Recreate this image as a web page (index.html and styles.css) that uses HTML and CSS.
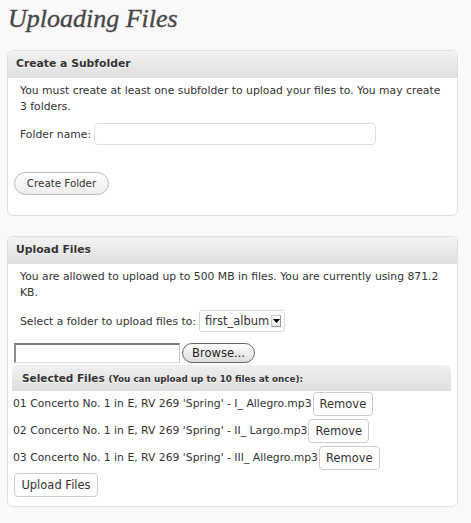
FILE: index.html
```html
<!DOCTYPE html>
<html>
<head>
<meta charset="utf-8">
<link rel="stylesheet" href="styles.css">
</head>
<body>
<h1 class="title">Uploading Files</h1>

<div class="box box-folder">
  <div class="box-head">Create a Subfolder</div>
  <div class="box-body">
    <p class="note">You must create at least one subfolder to upload your files to. You may create 3 folders.</p>
    <div class="field-row">
      <label class="label" for="fname">Folder name:</label>
      <input class="text-input" id="fname" type="text">
    </div>
    <button class="pill create-btn">Create Folder</button>
  </div>
</div>

<div class="box box-upload">
  <div class="box-head">Upload Files</div>
  <div class="box-body">
    <p class="note">You are allowed to upload up to 500 MB in files. You are currently using 871.2 KB.</p>
    <div class="select-row">
      <span class="label">Select a folder to upload files to:</span>
      <span class="select"><span class="select-text">first_album</span><span class="select-arrow"><svg width="7" height="4" viewBox="0 0 7 4"><path d="M0 0h7L3.5 4z" fill="#000"/></svg></span></span>
    </div>
    <div class="file-row">
      <span class="file-field"></span>
      <button class="browse-btn">Browse...</button>
    </div>
    <div class="selected-head"><span class="sel-title">Selected Files</span> <span class="sel-sub">(You can upload up to 10 files at once):</span></div>
    <div class="file-list">
      <div class="file-item"><span class="file-name">01 Concerto No. 1 in E, RV 269 'Spring' - I_ Allegro.mp3</span><button class="plain-btn">Remove</button></div>
      <div class="file-item"><span class="file-name">02 Concerto No. 1 in E, RV 269 'Spring' - II_ Largo.mp3</span><button class="plain-btn">Remove</button></div>
      <div class="file-item"><span class="file-name">03 Concerto No. 1 in E, RV 269 'Spring' - III_ Allegro.mp3</span><button class="plain-btn">Remove</button></div>
    </div>
    <button class="plain-btn upload-btn">Upload Files</button>
  </div>
</div>
</body>
</html>
```

FILE: styles.css
```css
html, body {
  margin: 0;
  padding: 0;
  background: #f9f9f9;
}
body {
  font-family: "DejaVu Sans", "Liberation Sans", sans-serif;
  font-size: 10.8px;
  color: #333;
  padding: 0 13px 0 7px;
}
.title {
  margin: 0;
  padding: 4px 0 0 1px;
  height: 46px;
  box-sizing: border-box;
  font-family: "Liberation Serif", "DejaVu Serif", serif;
  font-style: italic;
  font-weight: normal;
  font-size: 26px;
  line-height: 30px;
  color: #464646;
  -webkit-text-stroke: 0.35px #464646;
  text-shadow: 0 1px 0 #fff;
}
.box {
  width: 451px;
  box-sizing: border-box;
  border: 1px solid #dfdfdf;
  border-radius: 6px;
  background: #fff;
  overflow: hidden;
}
.box-folder {
  margin-top: 4px;
}
.box-upload {
  margin-top: 20px;
}
.box-head {
  height: 27px;
  box-sizing: border-box;
  padding: 0 0 0 8px;
  background: linear-gradient(#f2f2f2, #e0e0e0);
  border-bottom: 1px solid #dfdfdf;
  font-weight: bold;
  font-size: 10.8px;
  line-height: 26px;
  color: #333;
  text-shadow: 0 1px 0 #fff;
}
.box-body {
  padding: 0 6px;
}
.note {
  margin: 5px 6px 0 6px;
  line-height: 16px;
}
.label {
  white-space: nowrap;
}
.field-row {
  display: flex;
  align-items: center;
  gap: 3px;
  margin: 8px 0 0 6px;
}
.text-input {
  width: 282px;
  height: 22px;
  box-sizing: border-box;
  border: 1px solid #dfdfdf;
  border-radius: 4px;
  background: #fff;
  margin: 0;
  padding: 0 4px;
}
.box-folder .box-body {
  padding-bottom: 20px;
}
.pill {
  display: block;
  margin: 27px 0 0 0;
  height: 23px;
  width: 95px;
  padding: 0;
  border: 1px solid #bbb;
  border-radius: 12px;
  background: linear-gradient(#fff, #ececec);
  font-family: "DejaVu Sans", "Liberation Sans", sans-serif;
  font-size: 10.3px;
  color: #333;
  line-height: 21px;
  white-space: nowrap;
}
.select-row {
  display: flex;
  align-items: center;
  gap: 3px;
  margin: 9px 0 0 6px;
}
.select {
  display: flex;
  align-items: center;
  justify-content: space-between;
  width: 86px;
  height: 22px;
  box-sizing: border-box;
  border: 1px solid #d8d8d8;
  border-radius: 3px;
  background: #fff;
  padding: 0 3px 0 5px;
  font-size: 11.5px;
}
.select-arrow {
  display: flex;
  align-items: center;
  justify-content: center;
  width: 10px;
  height: 12px;
  box-sizing: border-box;
  border: 1px solid #999;
  border-top-color: #ccc;
  border-left-color: #ccc;
  background: linear-gradient(#fff, #e6e6e6);
}
.file-row {
  display: flex;
  align-items: center;
  gap: 2px;
  margin: 10px 0 0 0;
  height: 21px;
}
.file-field {
  width: 166px;
  height: 20px;
  box-sizing: border-box;
  background: #fff;
  border-top: 2px solid #7b7b7b;
  border-left: 2px solid #8d8d8d;
  border-right: 1px solid #c8c8c8;
  border-bottom: 1px solid #dcdcdc;
}
.browse-btn {
  width: 73px;
  height: 20px;
  margin: 1px 0 0 0;
  padding: 0;
  border: 1px solid #666;
  border-radius: 10px;
  background: linear-gradient(#fff, #dcdcdc);
  font-family: "DejaVu Sans", "Liberation Sans", sans-serif;
  font-size: 11.5px;
  color: #222;
  line-height: 18px;
}
.selected-head {
  margin: 2px 0 0 -2px;
  height: 26px;
  padding-left: 10px;
  border-radius: 6px 6px 0 0;
  background: linear-gradient(#f0f0f0, #dedede);
  line-height: 26px;
  font-weight: bold;
  text-shadow: 0 1px 0 #fff;
  white-space: nowrap;
}
.sel-title {
  font-size: 10.5px;
}
.sel-sub {
  font-size: 8.8px;
}
.file-list {
  margin: 1px 0 0 -1px;
}
.file-item {
  display: flex;
  align-items: flex-start;
  height: 27px;
}
.file-name {
  line-height: 24px;
  white-space: nowrap;
  margin-right: 1px;
}
.plain-btn {
  height: 24px;
  padding: 0 6px;
  border: 1px solid #ccc;
  border-radius: 4px;
  background: #fff;
  font-family: "DejaVu Sans", "Liberation Sans", sans-serif;
  font-size: 11.5px;
  color: #333;
  line-height: 22px;
  margin: 0;
}
.upload-btn {
  display: block;
  margin: 0;
  width: 84px;
  padding: 0;
}
.box-upload .box-body {
  padding-bottom: 9px;
}
```
